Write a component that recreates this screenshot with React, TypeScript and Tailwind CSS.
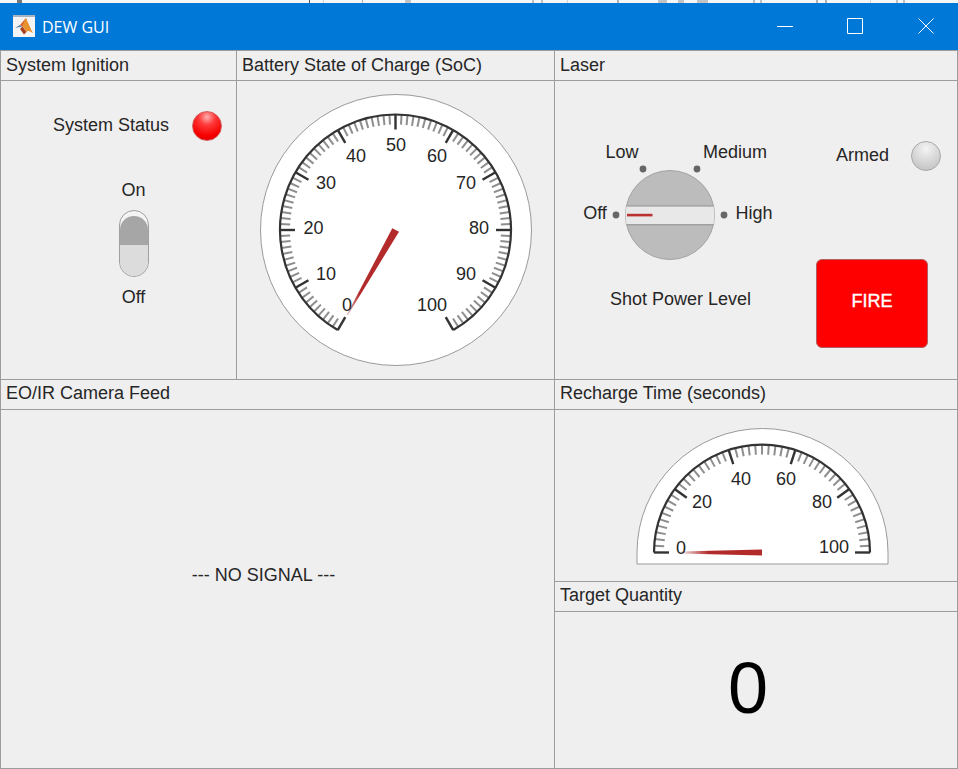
const labelFont = "font-['Liberation_Sans',Arial,sans-serif]"

// marks of the window behind, showing above the title bar: [gap, width, colour]
const behindMarks: [number, number, string][] = [
  [17, 5, "#777777"], [287, 1, "#555555"], [13, 1, "#d0d0d0"], [38, 1, "#b0b0b0"], [42, 6, "#c4c4c4"], [121, 2, "#c0c0c0"],
  [7, 2, "#c0c0c0"], [24, 1, "#d0d0d0"], [49, 2, "#b0b0b0"], [39, 9, "#c4c4c4"], [11, 6, "#c4c4c4"], [13, 11, "#c4c4c4"],
  [45, 2, "#c0c0c0"], [5, 2, "#c0c0c0"], [54, 2, "#b0b0b0"], [7, 2, "#b0b0b0"], [43, 1, "#d0d0d0"], [25, 2, "#c0c0c0"], [5, 2, "#c0c0c0"],
]

function polar(cx: number, cy: number, r: number, deg: number) {
  const a = (deg * Math.PI) / 180
  return [cx + r * Math.sin(a), cy - r * Math.cos(a)]
}

function Ticks({ cx, cy, r, start, sweep, count, major }: { cx: number; cy: number; r: number; start: number; sweep: number; count: number; major: number }) {
  const ticks = []
  for (let i = 0; i <= count; i++) {
    const deg = start + (sweep * i) / count
    const isMajor = i % major === 0
    const [x1, y1] = polar(cx, cy, r, deg)
    const [x2, y2] = polar(cx, cy, r - (isMajor ? 15 : 10), deg)
    ticks.push(
      <line key={i} x1={x1} y1={y1} x2={x2} y2={y2} stroke={isMajor ? "#333333" : "#8e8e8e"} strokeWidth={isMajor ? 2.4 : 2} />
    )
  }
  const [ax, ay] = polar(cx, cy, r, start)
  const [bx, by] = polar(cx, cy, r, start + sweep)
  return (
    <>
      {ticks}
      <path d={`M${ax} ${ay}A${r} ${r} 0 ${sweep > 180 ? 1 : 0} 1 ${bx} ${by}`} fill="none" stroke="#333333" strokeWidth="2.2" />
    </>
  )
}

function GaugeLabels({ labels }: { labels: [string, number, number][] }) {
  return (
    <>
      {labels.map(([t, x, y]) => (
        <text key={t} x={x} y={y} textAnchor="middle" dominantBaseline="central" fontSize="18" fill="#262626" fontFamily="'Liberation Sans', Arial, sans-serif">{t}</text>
      ))}
    </>
  )
}

function SocGauge() {
  const labels: [string, number, number][] = [
    ["0", 347, 305], ["10", 326, 274], ["20", 313.5, 228], ["30", 326, 183], ["40", 356, 156], ["50", 396, 144.5],
    ["60", 437, 156], ["70", 466, 183], ["80", 479, 228], ["90", 466, 274], ["100", 432, 304.5],
  ]
  return (
    <svg viewBox="258 92 276 276" className="h-[276px] w-[276px]">
      <defs>
        <linearGradient id="socNeedle" gradientUnits="userSpaceOnUse" x1="396" y1="230" x2="347" y2="315">
          <stop offset="0" stopColor="#b22a2a" />
          <stop offset="0.75" stopColor="#b22a2a" />
          <stop offset="1" stopColor="#b22a2a" stopOpacity="0.3" />
        </linearGradient>
      </defs>
      <circle cx="396" cy="230" r="135.5" fill="#ffffff" stroke="#9a9a9a" />
      <Ticks cx={395.5} cy={230} r={115.5} start={-150} sweep={300} count={100} major={10} />
      <polygon points="392.3,228.3 399,231.7 347.8,315.3 346.8,314.7" fill="url(#socNeedle)" />
      <GaugeLabels labels={labels} />
    </svg>
  )
}

function RechargeGauge() {
  const labels: [string, number, number][] = [
    ["0", 681, 548], ["20", 702, 502], ["40", 741, 479], ["60", 786, 479], ["80", 822, 502], ["100", 834, 547],
  ]
  return (
    <svg viewBox="635 426 254 140" className="h-[140px] w-[254px]">
      <defs>
        <linearGradient id="rechargeNeedle" gradientUnits="userSpaceOnUse" x1="762" y1="552" x2="680" y2="552">
          <stop offset="0" stopColor="#b22a2a" />
          <stop offset="0.65" stopColor="#b22a2a" />
          <stop offset="1" stopColor="#b22a2a" stopOpacity="0.1" />
        </linearGradient>
      </defs>
      <path d="M637 564V552.5A125.5 124 0 0 1 888 552.5V564Z" fill="#ffffff" stroke="#9a9a9a" />
      <Ticks cx={762} cy={552.5} r={108} start={-90} sweep={180} count={50} major={10} />
      <polygon points="762,549.5 762,555.5 680,553.5 680,551.5" fill="url(#rechargeNeedle)" />
      <GaugeLabels labels={labels} />
    </svg>
  )
}

function Knob() {
  const labels: [string, number, number][] = [
    ["Off", 595, 213], ["Low", 622, 151.5], ["Medium", 735, 151.5], ["High", 754, 213],
  ]
  const dots = [[616, 215], [643, 169], [697, 169], [724, 215]]
  return (
    <svg viewBox="575 140 210 124" className="h-[124px] w-[210px]">
      <defs>
        <clipPath id="knobClip"><circle cx="670" cy="215" r="44.5" /></clipPath>
      </defs>
      <circle cx="670" cy="215" r="44.5" fill="#bcbcbc" stroke="#a3a3a3" />
      <g clipPath="url(#knobClip)">
        <rect x="625" y="206" width="90" height="18" fill="#e8e8e8" />
        <rect x="625" y="205.5" width="90" height="1" fill="#8f8f8f" />
        <rect x="625" y="224" width="90" height="1.5" fill="#a0a0a0" />
      </g>
      <rect x="627" y="213.8" width="25.5" height="2.6" fill="#b83232" />
      {dots.map(([x, y]) => (
        <circle key={x} cx={x} cy={y} r="3.4" fill="#666666" />
      ))}
      <GaugeLabels labels={labels} />
    </svg>
  )
}

function MatlabIcon() {
  return (
    <svg viewBox="0 0 22 22" className="h-[22px] w-[22px]">
      <rect width="22" height="22" fill="#f4f4f4" />
      <rect width="22" height="2" fill="#a9b3c0" />
      <path d="M2 13L7 10L9.5 11.5Z" fill="#4f7fa8" />
      <path d="M7 10L12.5 3.5L14 4L9.5 11.5Z" fill="#d9622b" />
      <path d="M12.5 3.5C15 6 17 13 20 18C16.5 16 15 15 13.5 17C12 14 10.5 12.5 9.5 11.5C10.5 8 11.5 5.5 12.5 3.5Z" fill="#e8912f" />
      <path d="M9.5 11.5L13.5 17L11 19.5L7 14Z" fill="#a83f1d" />
    </svg>
  )
}

function Lamp({ on }: { on?: boolean }) {
  return (
    <div
      className={
        on
          ? "h-[30px] w-[30px] rounded-full border border-[#d06060] bg-[radial-gradient(circle_at_50%_18%,#ffb0b0_0%,#ff3a3a_30%,#f60000_70%,#dc0000_100%)]"
          : "h-[30px] w-[30px] rounded-full border border-[#a8a8a8] bg-[radial-gradient(circle_at_50%_25%,#f4f4f4_0%,#d4d4d4_55%,#bdbdbd_100%)]"
      }
    />
  )
}

function Panel({ title, top, className, children }: { title: string; top?: boolean; className?: string; children?: React.ReactNode }) {
  return (
    <section className={`flex flex-col border-r border-b border-[#9c9c9c] ${className ?? ""}`}>
      <div className={`flex h-[30px] shrink-0 items-center border-b border-[#9c9c9c] pl-[5px] text-[18px] leading-none whitespace-nowrap text-[#262626] ${top ? "pb-[2px]" : "pb-[3px]"}`}>
        {title}
      </div>
      <div className="min-h-0 flex-1">{children}</div>
    </section>
  )
}

export default function App() {
  return (
    <div className={`flex h-[769px] w-[958px] flex-col overflow-hidden bg-[#f0efef] ${labelFont}`}>
      <div className="flex h-[3px] shrink-0 bg-[#f6f6f6]">
        {behindMarks.map(([gap, width, colour], i) => (
          <span key={i} className="h-full shrink-0" style={{ marginLeft: gap, width, backgroundColor: colour }} />
        ))}
      </div>
      <header className="flex h-[47px] shrink-0 items-center bg-[#0078d7] pb-[1px] pl-[13px] text-white">
        <MatlabIcon />
        <span className="mt-[1px] ml-[7px] font-['Open_Sans',sans-serif] text-[16px]">DEW GUI</span>
        <div className="ml-auto flex items-center">
          <svg viewBox="0 0 16 16" className="mr-[54px] h-[16px] w-[16px]" fill="none" stroke="#ffffff"><path d="M0 8.5H16" /></svg>
          <svg viewBox="0 0 16 16" className="mr-[55px] h-[16px] w-[16px]" fill="none" stroke="#ffffff"><path d="M.5.5H15.5V15.5H.5Z" /></svg>
          <svg viewBox="0 0 16 16" className="mr-[24px] h-[16px] w-[16px]" fill="none" stroke="#ffffff"><path d="M.5.5L15.5 15.5M15.5.5L.5 15.5" /></svg>
        </div>
      </header>
      <main className="flex min-h-0 flex-1 flex-col border-t border-l border-[#9c9c9c]">
        <div className="flex h-[329px] shrink-0">
          <Panel title="System Ignition" top className="w-[236px] shrink-0">
            <div className="flex h-full flex-col items-center text-[18px] leading-none text-[#262626]">
              <div className="mt-[30px] flex w-full items-center justify-end pr-[14px]">
                <span className="mr-[23px] -translate-y-[1px]">System Status</span>
                <Lamp on />
              </div>
              <span className="mt-[40px] translate-x-[15px]">On</span>
              <div className="relative mt-[11px] h-[67px] w-[30px] translate-x-[15px] overflow-hidden rounded-full border border-[#a0a0a0] bg-[#f4f4f4]">
                <div className="mx-auto mt-[5px] h-[29px] w-[28px] rounded-t-full bg-[#a6a6a6]" />
                <div className="mx-auto h-[31px] w-[28px] rounded-b-full bg-[#dcdcdc]" />
              </div>
              <span className="mt-[11px] translate-x-[15px]">Off</span>
            </div>
          </Panel>
          <Panel title="Battery State of Charge (SoC)" top className="w-[318px] shrink-0">
            <div className="flex h-full items-center justify-center">
              <SocGauge />
            </div>
          </Panel>
          <Panel title="Laser" top className="flex-1">
            <div className="flex h-full text-[18px] leading-none text-[#262626]">
              <div className="ml-[20px] flex w-[210px] shrink-0 flex-col pt-[59px]">
                <Knob />
                <span className="mt-[26px] ml-[35px] whitespace-nowrap">Shot Power Level</span>
              </div>
              <div className="ml-[31px] flex w-[125px] flex-col">
                <div className="mt-[60px] flex items-center pl-[20px]">
                  <span className="-translate-y-[1px]">Armed</span>
                  <span className="ml-[22px]"><Lamp /></span>
                </div>
                <button className="mt-[88px] h-[89px] w-[112px] rounded-[6px] border border-[#b06060] bg-[#ff0000] pb-[5px] text-[18px] text-white [-webkit-text-stroke:0.4px_#ffffff]">
                  FIRE
                </button>
              </div>
            </div>
          </Panel>
        </div>
        <div className="flex min-h-0 flex-1">
          <Panel title="EO/IR Camera Feed" className="w-[554px] shrink-0">
            <div className="flex h-full items-center justify-center pr-[28px] pb-[27px] text-[18px] text-[#262626]">--- NO SIGNAL ---</div>
          </Panel>
          <div className="flex flex-1 flex-col">
            <Panel title="Recharge Time (seconds)" className="h-[202px] shrink-0">
              <div className="flex h-full items-start justify-center pt-[16px] pl-[12px]">
                <RechargeGauge />
              </div>
            </Panel>
            <Panel title="Target Quantity" className="flex-1">
              <div className="flex h-full items-center justify-center pr-[16px] pb-[5px] text-[72px] leading-none text-black">0</div>
            </Panel>
          </div>
        </div>
      </main>
    </div>
  )
}
